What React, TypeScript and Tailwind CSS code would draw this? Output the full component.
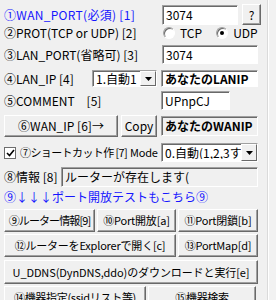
import React from "react";

const font = { fontFamily: '"Noto Sans CJK JP", "Liberation Sans", sans-serif' };

function Btn({ children, className = "" }: { children: React.ReactNode; className?: string }) {
  return (
    <div
      className={
        "flex items-center justify-center bg-[#f0f0f0] border border-t-white border-l-white border-r-[#696969] border-b-[#696969] shadow-[inset_-1px_-1px_0_#a0a0a0] text-black whitespace-nowrap overflow-hidden " +
        className
      }
    >
      {children}
    </div>
  );
}

function Field({ children, className = "", gray = false }: { children?: React.ReactNode; className?: string; gray?: boolean }) {
  return (
    <div
      className={
        "flex items-center pl-[3px] border border-t-[#a0a0a0] border-l-[#a0a0a0] border-r-white border-b-white shadow-[inset_1px_1px_0_#696969] text-[12px] text-black whitespace-nowrap overflow-hidden " +
        (gray ? "bg-[#f0f0f0] " : "bg-white ") +
        className
      }
    >
      {children}
    </div>
  );
}

function Arrow() {
  return (
    <div className="w-[16px] h-full shrink-0 flex items-center justify-center bg-[#f0f0f0] border border-t-white border-l-white border-r-[#696969] border-b-[#696969]">
      <svg width="7" height="4" viewBox="0 0 7 4">
        <polygon points="0,0 7,0 3.5,4" fill="#000" />
      </svg>
    </div>
  );
}

function Radio({ checked }: { checked?: boolean }) {
  return (
    <div className="w-[12px] h-[12px] rounded-full bg-white border border-t-[#a0a0a0] border-l-[#a0a0a0] border-r-white border-b-white shadow-[inset_1px_1px_0_#696969] flex items-center justify-center">
      {checked && <div className="w-[4px] h-[4px] rounded-full bg-black" />}
    </div>
  );
}

export default function App() {
  return (
    <div className="w-[276px] h-[300px] bg-[#f0f0f0] overflow-hidden flex" style={font}>
      <div className="w-[267px] shrink-0 flex flex-col pl-[4px] text-[12px] leading-none">
        {/* row 1 */}
        <div className="flex items-center h-[21px] mt-[4px]">
          <div className="w-[158px] text-[#1515ff] tracking-[0.3px]">①WAN_PORT(必須) [1]</div>
          <Field className="w-[76px] h-[20px]">3074</Field>
          <Btn className="ml-[4px] w-[19px] h-[21px] text-[12px]">?</Btn>
        </div>
        {/* row 2 */}
        <div className="flex items-center h-[18px] mt-[2px]">
          <div className="w-[159px]">②PROT(TCP or UDP) [2]</div>
          <Radio />
          <span className="ml-[5px]">TCP</span>
          <div className="ml-[14px]"><Radio checked /></div>
          <span className="ml-[5px]">UDP</span>
        </div>
        {/* row 3 */}
        <div className="flex items-center h-[19px] mt-[6px]">
          <div className="w-[158px]">③LAN_PORT(省略可) [3]</div>
          <Field className="w-[96px] h-[19px]">3074</Field>
        </div>
        {/* row 4 */}
        <div className="flex items-center h-[17px] mt-[6px]">
          <div className="w-[88px]">④LAN_IP [4]</div>
          <Field className="w-[65px] h-[17px]">
            <span className="flex-1">1.自動1</span>
            <Arrow />
          </Field>
          <Field className="ml-[4px] w-[97px] h-[17px] font-bold">あなたのLANIP</Field>
        </div>
        {/* row 5 */}
        <div className="flex items-center h-[19px] mt-[4px]">
          <div className="w-[157px]">⑤COMMENT　[5]</div>
          <Field className="w-[69px] h-[19px]">UPnpCJ</Field>
        </div>
        {/* row 6 */}
        <div className="flex items-center h-[22px] mt-[5px]">
          <Btn className="w-[114px] h-[22px] text-[12px]">⑥WAN_IP [6]→</Btn>
          <Btn className="ml-[3px] w-[36px] h-[22px] text-[12px]">Copy</Btn>
          <Field gray className="ml-[4px] w-[97px] h-[20px] font-bold">あなたのWANIP</Field>
        </div>
        {/* row 7 */}
        <div className="flex items-center h-[19px] mt-[6px]">
          <div className="w-[12px] h-[12px] shrink-0 bg-white border border-[#6d6d6d] flex items-center justify-center">
            <svg width="9" height="8" viewBox="0 0 9 8"><polyline points="1,4 3.5,6.5 8,1" fill="none" stroke="#000" strokeWidth="1.6" /></svg>
          </div>
          <span className="ml-[4px] w-[110px] shrink-0 text-[11px] tracking-[-0.6px] whitespace-nowrap">⑦ショートカット作 [7]</span>
          <span className="w-[31px] shrink-0 text-[11px] tracking-[-0.2px]">Mode</span>
          <Field className="w-[97px] h-[19px]">
            <span className="flex-1 overflow-hidden">0.自動(1,2,3すべて)</span>
            <Arrow />
          </Field>
        </div>
        {/* row 8 */}
        <div className="flex items-center h-[20px] mt-[5px]">
          <div className="w-[57px]">⑧情報 [8]</div>
          <Field gray className="w-[197px] h-[20px]">ルーターが存在します(</Field>
        </div>
        {/* row 9 */}
        <div className="flex items-center h-[16px] mt-[4px] text-[#1515ff]">⑨↓↓↓ポート開放テストもこちら⑨</div>
        {/* row 10 */}
        <div className="flex items-center h-[23px] mt-[6px] gap-[2px]">
          <Btn className="w-[91px] h-[23px] text-[11px] tracking-[-0.9px]">⑨ルーター情報[9]</Btn>
          <Btn className="w-[79px] h-[23px] text-[11px] tracking-[-0.2px]">⑩Port開放[a]</Btn>
          <Btn className="w-[80px] h-[23px] text-[11px] tracking-[-0.2px]">⑪Port閉鎖[b]</Btn>
        </div>
        {/* row 11 */}
        <div className="flex items-center h-[23px] mt-[2px] gap-[2px]">
          <Btn className="w-[172px] h-[23px] text-[11px] tracking-[-0.2px]">⑫ルーターをExplorerで開く[c]</Btn>
          <Btn className="w-[80px] h-[23px] text-[11px] tracking-[-0.2px]">⑬PortMap[d]</Btn>
        </div>
        {/* row 12 */}
        <div className="flex items-center h-[24px] mt-[3px]">
          <Btn className="w-[254px] h-[24px] text-[11px] tracking-[-0.1px]">U_DDNS(DynDNS,ddo)のダウンロードと実行[e]</Btn>
        </div>
        {/* row 13 */}
        <div className="flex items-start h-[23px] mt-[2px] gap-[2px]">
          <Btn className="w-[142px] h-[23px] text-[11px] tracking-[-0.3px]">⑭機器指定(ssidリスト等)</Btn>
          <Btn className="w-[108px] h-[23px] text-[11px] tracking-[-0.3px]">⑮機器検索</Btn>
        </div>
      </div>
      <div className="w-[1px] h-full bg-[#dadada]" />
      <div className="w-[1px] h-full bg-white" />
      <div className="flex-1 h-full bg-[#f2f2f2]" />
    </div>
  );
}
